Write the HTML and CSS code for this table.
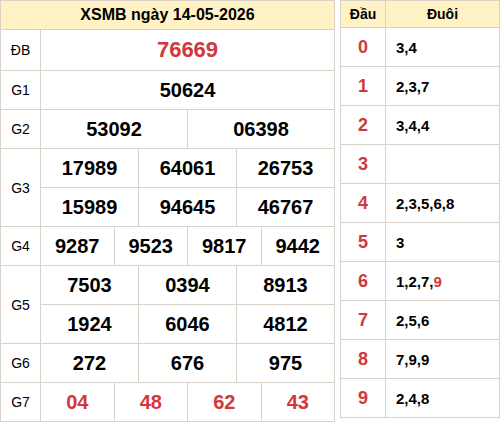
FILE: index.html
```html
<!DOCTYPE html>
<html lang="vi">
<head>
  <meta charset="UTF-8" />
  <title>XSMB ngày 14-05-2026</title>
  <meta name="viewport" content="width=device-width, initial-scale=1.0" />
  <link rel="stylesheet" href="styles.css">
</head>
<body>
  <div class="wrap">
    <table class="kq">
      <colgroup>
        <col class="col-label">
        <col span="12">
      </colgroup>
      <tr class="head">
        <th colspan="13">XSMB ngày 14-05-2026</th>
      </tr>
      <tr class="db">
        <td class="label">ĐB</td>
        <td colspan="12" class="red">76669</td>
      </tr>
      <tr>
        <td class="label">G1</td>
        <td colspan="12">50624</td>
      </tr>
      <tr>
        <td class="label">G2</td>
        <td colspan="6">53092</td>
        <td colspan="6">06398</td>
      </tr>
      <tr>
        <td class="label" rowspan="2">G3</td>
        <td colspan="4">17989</td>
        <td colspan="4">64061</td>
        <td colspan="4">26753</td>
      </tr>
      <tr>
        <td colspan="4">15989</td>
        <td colspan="4">94645</td>
        <td colspan="4">46767</td>
      </tr>
      <tr>
        <td class="label">G4</td>
        <td colspan="3">9287</td>
        <td colspan="3">9523</td>
        <td colspan="3">9817</td>
        <td colspan="3">9442</td>
      </tr>
      <tr>
        <td class="label" rowspan="2">G5</td>
        <td colspan="4">7503</td>
        <td colspan="4">0394</td>
        <td colspan="4">8913</td>
      </tr>
      <tr>
        <td colspan="4">1924</td>
        <td colspan="4">6046</td>
        <td colspan="4">4812</td>
      </tr>
      <tr>
        <td class="label">G6</td>
        <td colspan="4">272</td>
        <td colspan="4">676</td>
        <td colspan="4">975</td>
      </tr>
      <tr>
        <td class="label">G7</td>
        <td colspan="3" class="red">04</td>
        <td colspan="3" class="red">48</td>
        <td colspan="3" class="red">62</td>
        <td colspan="3" class="red">43</td>
      </tr>
    </table>

    <table class="loto">
      <colgroup>
        <col class="col-dau">
        <col>
      </colgroup>
      <tr class="head">
        <th>Đầu</th>
        <th>Đuôi</th>
      </tr>
      <tr><td class="dau">0</td><td class="duoi">3,4</td></tr>
      <tr><td class="dau">1</td><td class="duoi">2,3,7</td></tr>
      <tr><td class="dau">2</td><td class="duoi">3,4,4</td></tr>
      <tr><td class="dau">3</td><td class="duoi"></td></tr>
      <tr><td class="dau">4</td><td class="duoi">2,3,5,6,8</td></tr>
      <tr><td class="dau">5</td><td class="duoi">3</td></tr>
      <tr><td class="dau">6</td><td class="duoi">1,2,7,<span class="hit">9</span></td></tr>
      <tr><td class="dau">7</td><td class="duoi">2,5,6</td></tr>
      <tr><td class="dau">8</td><td class="duoi">7,9,9</td></tr>
      <tr><td class="dau">9</td><td class="duoi">2,4,8</td></tr>
    </table>
  </div>
</body>
</html>
```

FILE: styles.css
```css
* {
  box-sizing: border-box;
}

body {
  margin: 0;
  font-family: "Liberation Sans", Arial, sans-serif;
  color: #000;
  background: #fff;
}

.wrap {
  display: flex;
  align-items: flex-start;
  gap: 5px;
}

table {
  border-collapse: collapse;
  table-layout: fixed;
}

th,
td {
  border: 1px solid #d8d2ca;
  padding: 0;
  text-align: center;
}

.head th {
  background: #fff3c6;
  font-weight: bold;
}

/* ket qua */
.kq {
  width: 335px;
}

.kq .col-label {
  width: 40px;
}

.kq th {
  height: 29px;
  font-size: 16px;
}

.kq td {
  height: 39px;
  font-size: 20px;
  font-weight: bold;
}

.kq .db td {
  height: 41px;
}

.kq .db .red {
  font-size: 22px;
}

.kq td.label {
  font-size: 14px;
  font-weight: normal;
}

.red {
  color: #d0383b;
}

/* loto dau duoi */
.loto {
  width: 160px;
}

.loto .col-dau {
  width: 45px;
}

.loto th {
  height: 27px;
  font-size: 14px;
}

.loto td {
  height: 39px;
  font-weight: bold;
}

.loto .dau {
  color: #d0383b;
  font-size: 18px;
}

.loto .duoi {
  text-align: left;
  padding-left: 10px;
  font-size: 15px;
}

.hit {
  color: #d0383b;
}
```
